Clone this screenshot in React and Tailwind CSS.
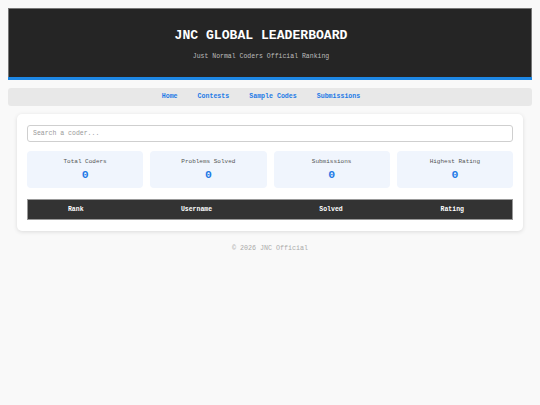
import React, { useState } from 'react';

const stats = [
  { label: 'Total Coders', value: 0 },
  { label: 'Problems Solved', value: 0 },
  { label: 'Submissions', value: 0 },
  { label: 'Highest Rating', value: 0 },
];

const links = ['Home', 'Contests', 'Sample Codes', 'Submissions'];

export default function App() {
  const [query, setQuery] = useState('');

  return (
    <div className="min-h-[405px] bg-[#f9f9f9] p-2 font-['Courier_New','Liberation_Mono',monospace] text-[#333]">
      {/* header */}
      <header className="border border-b-0 border-[#777] bg-[#252525]">
        <div className="flex h-[68px] flex-col items-center pr-[18px] pt-[19px]">
          <h1 className="text-[13.1px] font-bold leading-[16px] text-white">JNC GLOBAL LEADERBOARD</h1>
          <p className="mt-[9px] text-[6.5px] leading-[8px] text-[#bdbdbd]">Just Normal Coders Official Ranking</p>
        </div>
        <div className="-mx-px h-[3px] bg-[#1e88e5]"></div>
      </header>

      {/* nav */}
      <nav className="mt-[8px] flex h-[18px] items-center justify-center gap-[20px] rounded-[3px] bg-[#e8e8e8] pr-[18px]">
        {links.map(l => (
          <a key={l} href="#" className="text-[6.6px] font-bold text-[#1e7ae6]">{l}</a>
        ))}
      </nav>

      {/* main card */}
      <main className="mx-[9px] mt-[8px] rounded-[5px] bg-white px-[10px] pb-[11px] pt-[11px] shadow-[0_1px_4px_rgba(0,0,0,0.12)]">
        <input
          value={query}
          onChange={e => setQuery(e.target.value)}
          placeholder="Search a coder..."
          className="block h-[17px] w-full rounded-[3px] border border-[#cfcfcf] px-[5px] text-[6.5px] outline-none placeholder:text-[#999]"
        />

        <div className="mt-[9px] grid grid-cols-4 gap-[7px]">
          {stats.map(s => (
            <div key={s.label} className="flex h-[37px] flex-col items-center rounded-[4px] bg-[#f0f5fd] pt-[7px]">
              <span className="text-[6px] leading-[8px] text-[#555]">{s.label}</span>
              <span className="mt-[2px] text-[11.5px] font-bold leading-[14px] text-[#1e7ae6]">{s.value}</span>
            </div>
          ))}
        </div>

        <table className="mt-[11px] w-full table-fixed border-collapse">
          <thead>
            <tr className="h-[20px] border border-[#999] bg-[#333] text-[6.5px] font-bold text-white">
              <th className="w-[96px] font-bold">Rank</th>
              <th className="w-[146px] font-bold">Username</th>
              <th className="w-[123px] font-bold">Solved</th>
              <th className="font-bold">Rating</th>
            </tr>
          </thead>
          <tbody></tbody>
        </table>
      </main>

      <footer className="mt-[12px] text-center text-[6.7px] text-[#aaa]">© 2026 JNC Official</footer>
    </div>
  );
}
